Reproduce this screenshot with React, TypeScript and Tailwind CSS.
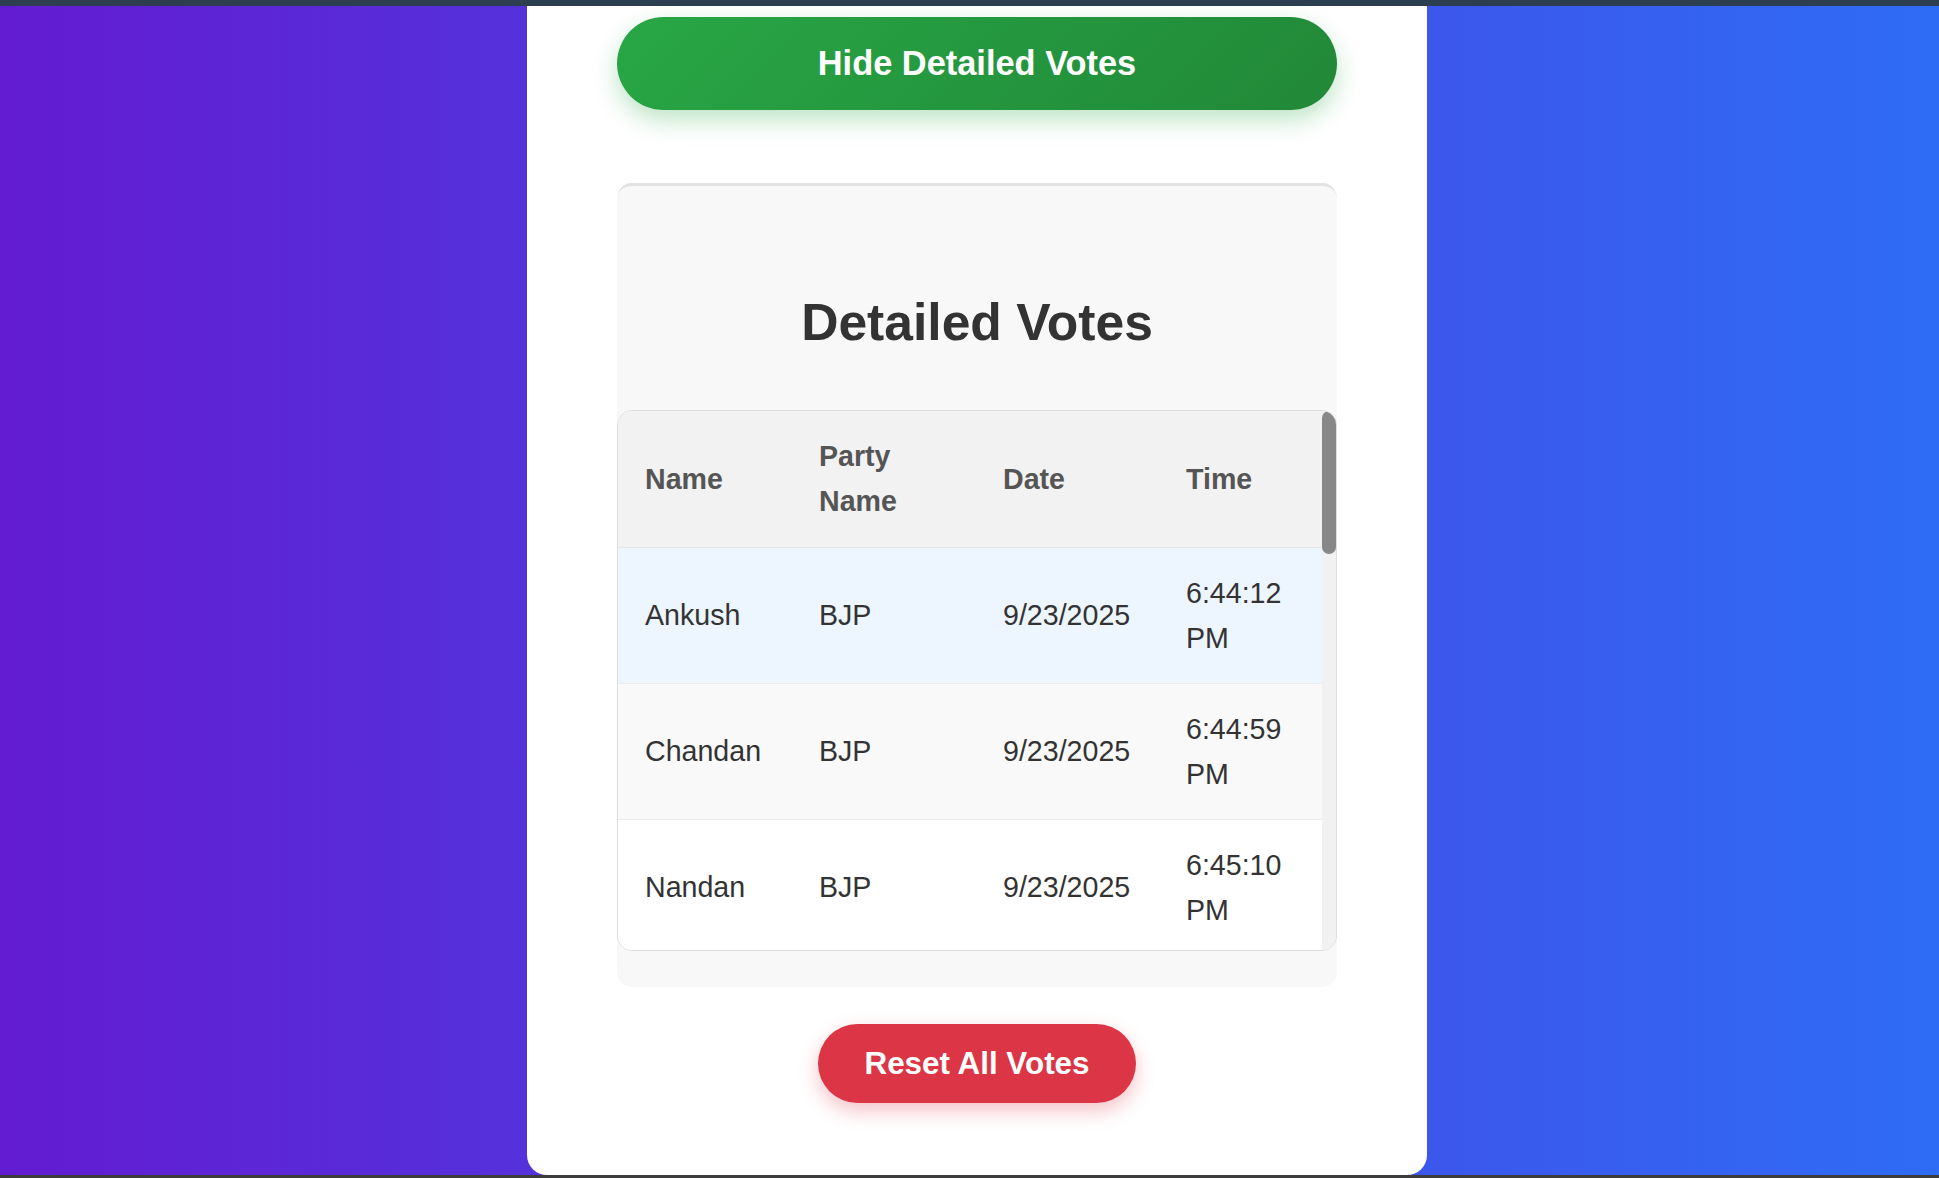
const votes = [
    { name: "Ankush", party: "BJP", date: "9/23/2025", time: "6:44:12 PM", bg: "bg-[#edf5ff]" },
    { name: "Chandan", party: "BJP", date: "9/23/2025", time: "6:44:59 PM", bg: "bg-[#f9f9f9]" },
    { name: "Nandan", party: "BJP", date: "9/23/2025", time: "6:45:10 PM", bg: "bg-white" }
];

const App = () => {
    return (
        <div className="h-[1178px] w-full overflow-hidden flex flex-col font-['Liberation_Sans',Arial,sans-serif] bg-[linear-gradient(90deg,#631bd1_0%,#2e6cf5_100%)]">
            <div className="h-[6px] bg-[#2c3e50] shrink-0" />

            <div className="flex-1 flex justify-center pl-[15px] min-h-0">
                <div className="w-[900px] bg-white rounded-b-[20px] pt-[11px] pb-[72px] flex flex-col items-center">
                    <button className="w-[720px] h-[93px] rounded-full text-white font-bold text-[34.4px] leading-[39px] bg-[linear-gradient(135deg,#28a745,#218838)] shadow-[0_10px_25px_rgba(40,167,69,0.3)]">
                        Hide Detailed Votes
                    </button>

                    <div className="mt-[73px] w-[720px] bg-[#f8f8f8] rounded-[15px] border-t-[3px] border-[#e2e2e2] pt-[108px] pb-[36px]">
                        <h2 className="text-center text-[51.6px] leading-[57px] font-bold text-[#333] mb-[59px]">
                            Detailed Votes
                        </h2>

                        <div className="h-[541px] border border-[#dddddd] rounded-[15px] overflow-hidden flex bg-white">
                            <div className="flex-1 overflow-hidden">
                                <table className="w-full table-fixed border-collapse text-[28.6px] leading-[45px]">
                                    <colgroup>
                                        <col className="w-[174px]" />
                                        <col className="w-[184px]" />
                                        <col className="w-[183px]" />
                                        <col className="w-[163px]" />
                                    </colgroup>
                                    <thead>
                                        <tr className="bg-[#f2f2f2] border-b border-[#e6e6e6]">
                                            {["Name", "Party Name", "Date", "Time"].map((h) => (
                                                <th
                                                    key={h}
                                                    className="text-left font-bold text-[#555] pl-[27px] pr-[28px] py-[23px] align-middle"
                                                >
                                                    {h}
                                                </th>
                                            ))}
                                        </tr>
                                    </thead>
                                    <tbody>
                                        {votes.map((v, index) => (
                                            <tr key={index} className={`${v.bg} border-b border-[#ececec]`}>
                                                <td className="pl-[27px] pr-[16px] py-[22.5px] text-[#333] align-middle">{v.name}</td>
                                                <td className="pl-[27px] pr-[16px] py-[22.5px] text-[#333] align-middle">{v.party}</td>
                                                <td className="pl-[27px] pr-[10px] py-[22.5px] text-[#333] align-middle whitespace-nowrap">{v.date}</td>
                                                <td className="pl-[27px] pr-[28px] py-[22.5px] text-[#333] align-middle">{v.time}</td>
                                            </tr>
                                        ))}
                                    </tbody>
                                </table>
                            </div>
                            {/* scrollbar */}
                            <div className="w-[14px] bg-[#f1f1f1] shrink-0">
                                <div className="h-[143px] w-full rounded-full bg-[#888]" />
                            </div>
                        </div>
                    </div>

                    <button className="mt-[37px] w-[318px] h-[79px] rounded-full bg-[#dc3545] text-white font-bold text-[31.4px] leading-[36px] shadow-[0_8px_20px_rgba(220,53,69,0.3)]">
                        Reset All Votes
                    </button>
                </div>
            </div>

            <div className="h-[3px] bg-[#3c3c3c] shrink-0" />
        </div>
    );
};

export default App;
